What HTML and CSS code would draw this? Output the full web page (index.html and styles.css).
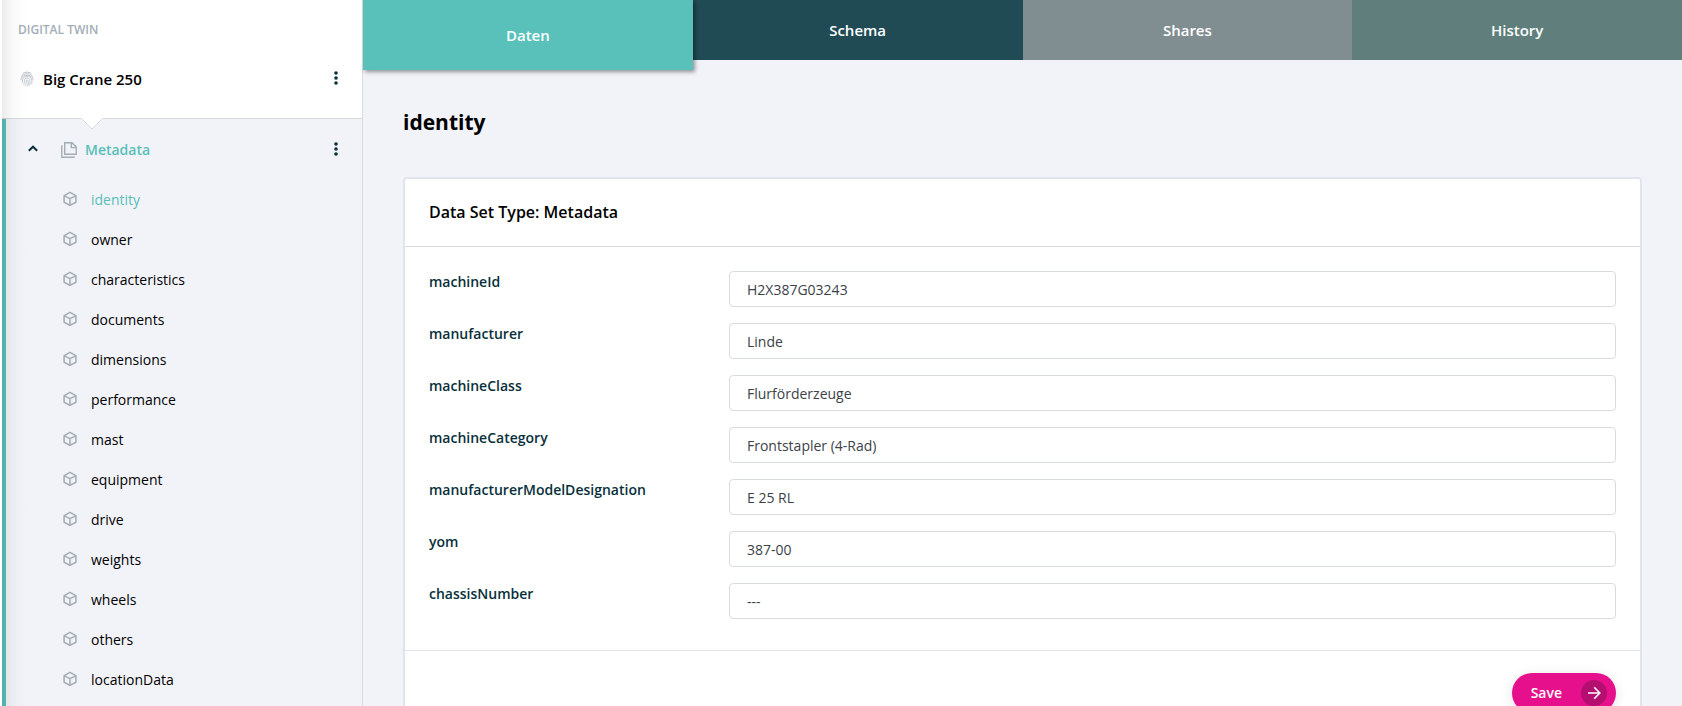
FILE: index.html
```html
<!DOCTYPE html>
<html lang="de">
<head>
<meta charset="utf-8">
<title>Digital Twin</title>
<link rel="stylesheet" href="styles.css">
</head>
<body>
<svg class="sprite" aria-hidden="true">
  <symbol id="cube" viewBox="0 0 14 16"><path d="M7 1.400 12.900 4.600v6.600L7 14.500 1.100 11.200V4.600zM1.300 4.800 7 7.600l5.700-2.800M7 7.600v6.700"/></symbol>
  <symbol id="dots" viewBox="0 0 4 14"><circle cx="2" cy="2" r="1.800"/><circle cx="2" cy="7" r="1.800"/><circle cx="2" cy="12" r="1.800"/></symbol>
</svg>
<div class="app">
  <aside class="sidebar">
    <header class="twin">
      <p class="eyebrow">DIGITAL TWIN</p>
      <div class="twin-row">
        <svg class="finger" viewBox="0 0 14 16" aria-hidden="true"><path d="M3 2.200C5.200.8 8.800.8 11 2.200M1 5.800C3 1.700 11 1.700 13 5.800M.8 9.300C.8 2.500 13.200 2.500 13.200 9.300M2 12c1.100-2-.5-6.600 5-6.700 5 0 5.200 4.500 4.700 7.700M3.600 13.700c1.700-2.800-.3-6.500 3.400-6.600 3.300 0 3.200 4 2.700 7.500M5.300 14.900C7 12.200 5.500 8.900 7 8.900s1.500 3.600.6 6.500"/></svg>
        <h1 class="twin-name">Big Crane 250</h1>
        <button class="more" type="button" aria-label="Twin options"><svg><use href="#dots"/></svg></button>
      </div>
    </header>
    <nav class="tree" aria-label="Data sets">
      <svg class="notch" viewBox="0 0 22 12" aria-hidden="true"><path class="notch-fill" d="M0 0H22L11 11z"/><path class="notch-line" d="M.5.5 11 11 21.500.5"/></svg>
      <div class="group">
        <button class="toggle" type="button" aria-label="Collapse Metadata" aria-expanded="true"><svg viewBox="0 0 10 7"><path d="M.8 5.700 5 1.700l4.200 4"/></svg></button>
        <svg class="files" viewBox="0 0 16 16" aria-hidden="true"><path d="M3.700.8h7.300l4.200 4.100v7.300H3.700zM10.300 1v4.600H15M.8 3.200v12h13"/></svg>
        <a class="group-name" href="#">Metadata</a>
        <button class="more" type="button" aria-label="Metadata options"><svg><use href="#dots"/></svg></button>
      </div>
      <ul class="items">
        <li><a class="item current" href="#" aria-current="page"><svg><use href="#cube"/></svg>identity</a></li>
        <li><a class="item" href="#"><svg><use href="#cube"/></svg>owner</a></li>
        <li><a class="item" href="#"><svg><use href="#cube"/></svg>characteristics</a></li>
        <li><a class="item" href="#"><svg><use href="#cube"/></svg>documents</a></li>
        <li><a class="item" href="#"><svg><use href="#cube"/></svg>dimensions</a></li>
        <li><a class="item" href="#"><svg><use href="#cube"/></svg>performance</a></li>
        <li><a class="item" href="#"><svg><use href="#cube"/></svg>mast</a></li>
        <li><a class="item" href="#"><svg><use href="#cube"/></svg>equipment</a></li>
        <li><a class="item" href="#"><svg><use href="#cube"/></svg>drive</a></li>
        <li><a class="item" href="#"><svg><use href="#cube"/></svg>weights</a></li>
        <li><a class="item" href="#"><svg><use href="#cube"/></svg>wheels</a></li>
        <li><a class="item" href="#"><svg><use href="#cube"/></svg>others</a></li>
        <li><a class="item" href="#"><svg><use href="#cube"/></svg>locationData</a></li>
      </ul>
    </nav>
  </aside>
  <main class="main">
    <nav class="tabs" aria-label="Views">
      <a class="tab tab-data" href="#" aria-current="page">Daten</a>
      <a class="tab tab-schema" href="#">Schema</a>
      <a class="tab tab-shares" href="#">Shares</a>
      <a class="tab tab-history" href="#">History</a>
    </nav>
    <div class="content">
      <h2 class="title">identity</h2>
      <form class="card">
        <h3 class="card-title">Data Set Type: Metadata</h3>
        <div class="fields">
          <label for="f1">machineId</label><input id="f1" type="text" value="H2X387G03243">
          <label for="f2">manufacturer</label><input id="f2" type="text" value="Linde">
          <label for="f3">machineClass</label><input id="f3" type="text" value="Flurförderzeuge">
          <label for="f4">machineCategory</label><input id="f4" type="text" value="Frontstapler (4-Rad)">
          <label for="f5">manufacturerModelDesignation</label><input id="f5" type="text" value="E 25 RL">
          <label for="f6">yom</label><input id="f6" type="text" value="387-00">
          <label for="f7">chassisNumber</label><input id="f7" type="text" value="---">
        </div>
        <footer class="card-footer">
          <button class="save" type="button">Save<span class="save-icon"><svg viewBox="0 0 14 14" aria-hidden="true"><path d="M1 7h11.500M7.200 1.300 12.800 7l-5.600 5.700"/></svg></span></button>
        </footer>
      </form>
    </div>
  </main>
</div>
</body>
</html>
```

FILE: styles.css
```css
* { box-sizing: border-box; }

body {
  margin: 0;
  background: #f2f3f9;
  color: #000;
  font: 14px/20px "Open Sans", "Noto Sans", sans-serif;
}

h1, h2, h3, p, ul { margin: 0; padding: 0; }
ul { list-style: none; }
a { color: inherit; text-decoration: none; }
button { border: 0; background: none; padding: 0; font: inherit; cursor: pointer; }
svg { display: block; fill: none; }

.sprite { position: absolute; width: 0; height: 0; }

.app { display: flex; height: 100vh; overflow: hidden; }

/* Sidebar */
.sidebar {
  position: relative;
  display: flex;
  flex-direction: column;
  flex: 0 0 363px;
  border-left: 2px solid #fff;
  border-right: 1px solid #d8dade;
}
.sidebar::after {
  content: "";
  position: absolute;
  inset: 0 auto 0 0;
  width: 24px;
  background: linear-gradient(to right, rgba(0, 0, 0, .08), rgba(0, 0, 0, .025) 45%, transparent);
  pointer-events: none;
}
.twin {
  background: #fff;
  border-bottom: 1px solid #d8dade;
  padding: 20px 23px 24px 16px;
}
.eyebrow { color: #a3adb8; font-size: 12px; font-weight: 600; }
.twin-row { display: flex; align-items: center; height: 30px; margin-top: 24px; padding-left: 2px; }
.finger { width: 14px; height: 16px; stroke: #a3adb8; stroke-width: 0.7; }
.twin-name { margin-left: 9px; font-size: 15px; font-weight: 600; }
.more { display: flex; margin-left: auto; padding: 0 1px 2px 0; }
.more svg { width: 4px; height: 14px; fill: #08303a; }

.tree {
  position: relative;
  flex: 1;
  border-left: 4px solid #59bfb8;
  background: #f2f3f9;
}
.notch { position: absolute; top: -1px; left: 75px; width: 22px; height: 12px; }
.notch-fill { fill: #fff; }
.notch-line { stroke: #d8dade; }
.group { display: flex; align-items: center; height: 61px; padding: 0 23px 0 22px; }
.toggle { padding-bottom: 2px; }
.toggle svg { width: 10px; height: 7px; stroke: #08303a; stroke-width: 2; }
.files { width: 16px; height: 16px; margin-left: 23px; stroke: #a3adb8; stroke-width: 1.4; }
.group-name { margin-left: 8px; color: #59bfb8; font-weight: 600; }
.item { display: flex; align-items: center; gap: 14px; height: 40px; padding-left: 57px; }
.item svg { width: 14px; height: 16px; margin-bottom: 2px; stroke: #a3adb8; stroke-width: 1.5; }
.current { color: #59bfb8; }

/* Tabs */
.main { display: flex; flex: 1; flex-direction: column; min-width: 0; }
.tabs { display: grid; grid-template: 60px / repeat(4, 1fr); flex: none; }
.tab {
  display: flex;
  align-items: center;
  justify-content: center;
  color: #fff;
  font-size: 15px;
  font-weight: 600;
}
.tab-data { z-index: 1; height: 70px; background: #59c1ba; box-shadow: 2px 2px 4px rgba(0, 0, 0, .4); }
.tab-schema { background: #204b54; }
.tab-shares { background: #808e92; }
.tab-history { background: #5f7e7c; }

/* Content */
.content { padding: 46px 40px 40px; }
.title { font-size: 21px; line-height: 32px; font-weight: 700; }
.card { margin-top: 39px; border: 2px solid #e0e4f0; border-radius: 4px; background: #fff; }
.card-title { padding: 23px 24px 24px; border-bottom: 1px solid #d8dade; font-size: 16px; font-weight: 600; }
.fields {
  display: grid;
  grid-template-columns: 276px 1fr;
  gap: 16px 24px;
  padding: 24px 24px 31px;
}
.fields label { color: #08303a; line-height: 22px; font-weight: 600; }
.fields input {
  min-width: 0;
  height: 36px;
  padding: 0 17px;
  border: 1px solid #d8dce1;
  border-radius: 4px;
  background: #fff;
  color: #3c4248;
  font: inherit;
}
.card-footer { display: flex; justify-content: flex-end; padding: 22px 24px; border-top: 1px solid #e0e4f0; }
.save {
  display: flex;
  align-items: center;
  gap: 19px;
  height: 40px;
  padding: 0 9px 0 19px;
  border-radius: 20px;
  background: #e6108c;
  box-shadow: 0 2px 12px rgba(0, 0, 0, .12);
  color: #fff;
  font-weight: 600;
}
.save-icon { display: grid; place-items: center; width: 26px; height: 26px; border-radius: 50%; background: #b40f70; }
.save-icon svg { width: 14px; height: 14px; stroke: #fff; stroke-width: 1.6; }
```
